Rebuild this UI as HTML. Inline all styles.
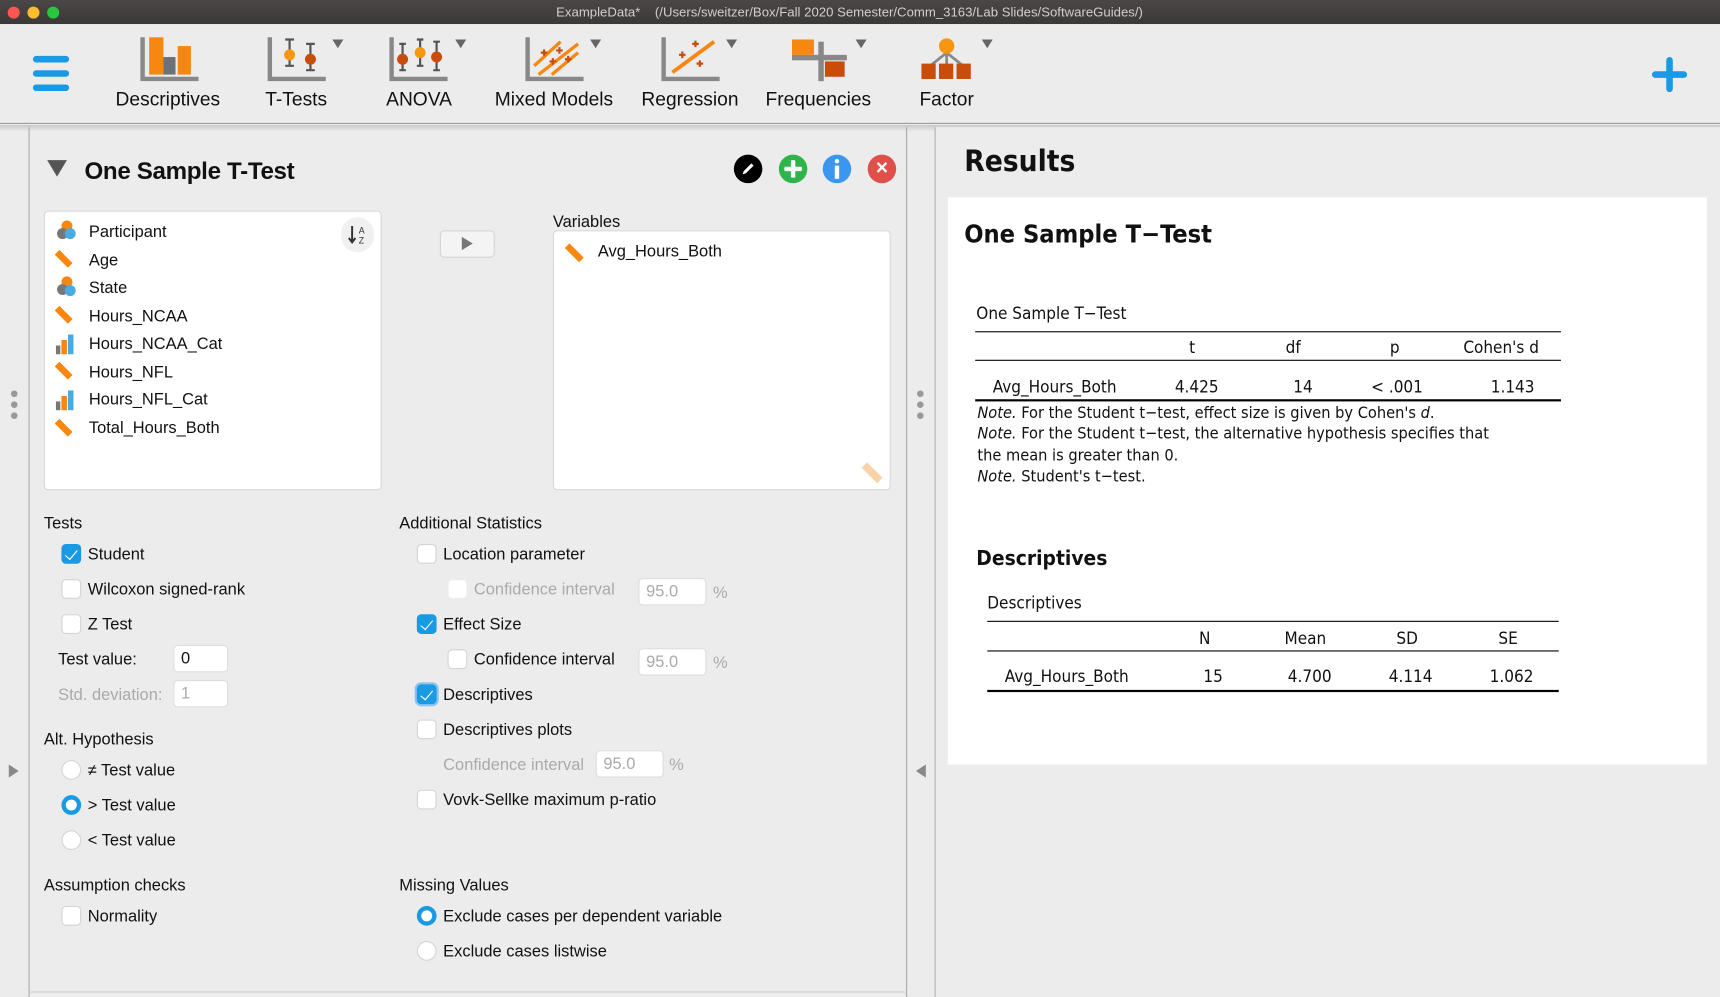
<!DOCTYPE html>
<html><head><meta charset="utf-8">
<style>
*{margin:0;padding:0;box-sizing:border-box}
html,body{width:1720px;height:997px;overflow:hidden;background:#ececec}
#w{position:absolute;left:0;top:0;width:1568px;height:909px;transform:scale(1.09694,1.0968);transform-origin:0 0;font-family:"Liberation Sans",sans-serif;color:#111;background:#ececec}
.a{position:absolute}
.t{position:absolute;font-size:15px;line-height:18px;white-space:nowrap;margin-top:1.5px}
.g{color:#aaa}
.cb{position:absolute;width:18px;height:18px;border-radius:4px;background:#fff;border:1px solid #d4d4d4}
.cb.on{background:#1a9ae2;border-color:#1a9ae2}
.cb.on:after{content:"";position:absolute;left:5px;top:2px;width:5px;height:10px;border:solid #fff;border-width:0 1.6px 1.6px 0;transform:rotate(40deg)}
.rb{position:absolute;width:18px;height:18px;border-radius:50%;background:#fff;border:1px solid #d4d4d4}
.rb.on{border:4px solid #1a9ae2}
.inp{position:absolute;width:50px;height:25px;background:#fff;border:1px solid #ddd;border-radius:4px;font-size:15px;line-height:23px;padding-left:6px}
.tb{position:absolute;top:80px;font-size:17.5px;text-align:center;width:140px;color:#111}
.dd{position:absolute;top:36px;width:0;height:0;border-left:5px solid transparent;border-right:5px solid transparent;border-top:8px solid #666}
.rt{font-family:"DejaVu Sans Condensed","DejaVu Sans",sans-serif;font-size:15.5px}
</style></head><body><div id="w">
<div class="a" style="left:0;top:0;width:1568px;height:22px;background:linear-gradient(#4a4746,#3b3838)"></div>
<div class="a" style="left:7px;top:6px;width:11px;height:11px;border-radius:50%;background:#fd5753"></div>
<div class="a" style="left:25px;top:6px;width:11px;height:11px;border-radius:50%;background:#fdbc2e"></div>
<div class="a" style="left:43px;top:6px;width:11px;height:11px;border-radius:50%;background:#29c73f"></div>
<div class="t" style="left:507px;top:3px;font-size:12px;line-height:16px;color:#cfcfcf;margin-top:0">ExampleData* &nbsp;&nbsp; (/Users/sweitzer/Box/Fall 2020 Semester/Comm_3163/Lab Slides/SoftwareGuides/)</div>
<div class="a" style="left:0;top:22px;width:1568px;height:91px;background:#ececec;border-bottom:1px solid #9a9a9a"></div>
<div class="a" style="left:0;top:114px;width:1568px;height:6px;background:linear-gradient(#c8c8c8,#ececec)"></div>
<div class="a" style="left:30px;top:51px;width:33px;height:6px;border-radius:3px;background:#1a9ae2"></div>
<div class="a" style="left:30px;top:64px;width:33px;height:6px;border-radius:3px;background:#1a9ae2"></div>
<div class="a" style="left:30px;top:77px;width:33px;height:6px;border-radius:3px;background:#1a9ae2"></div>
<svg class="a" style="left:0;top:22px" width="1000" height="60">
 <defs><g id="ax"><path d="M0 0V38H51" fill="none" stroke="#888" stroke-width="4"/></g></defs>
 <g transform="translate(130,12)"><use href="#ax"/><rect x="6" y="0" width="13" height="34" fill="#f7870f"/><rect x="19" y="18" width="11" height="16" fill="#6b7378"/><rect x="32" y="8" width="12" height="26" fill="#f7870f"/></g>
 <g transform="translate(246,12)"><use href="#ax"/><path d="M18 2V26M14 2H22M14 26H22M37 6V30M33 6H41M33 30H41" stroke="#555" stroke-width="2"/><circle cx="18" cy="16" r="5" fill="#f7960f"/><circle cx="37" cy="20" r="5" fill="#c94c0b"/></g>
 <g transform="translate(357,12)"><use href="#ax"/><path d="M10 6V30M26 2V26M41 4V30M7 6H13M7 30H13M23 2H29M23 26H29M38 4H44M38 30H44" stroke="#555" stroke-width="2"/><circle cx="10" cy="20" r="5" fill="#c94c0b"/><circle cx="26" cy="14" r="5" fill="#f7960f"/><circle cx="41" cy="18" r="5" fill="#c94c0b"/></g>
 <g transform="translate(481,12)"><use href="#ax"/><path d="M6 26L30 4M10 34L46 6M22 34L46 14" stroke="#f7870f" stroke-width="3"/><path d="M12 14h6M15 11v6M26 12h6M29 9v6M20 22h6M23 19v6M34 20h6M37 17v6" stroke="#c94c0b" stroke-width="2"/></g>
 <g transform="translate(605,12)"><use href="#ax"/><path d="M8 32L46 4" stroke="#f7870f" stroke-width="3.5"/><path d="M14 16h6M17 13v6M26 6h6M29 3v6M30 24h6M33 21v6" stroke="#c94c0b" stroke-width="2"/></g>
 <g transform="translate(722,12)"><rect x="0" y="16" width="50" height="5" fill="#888"/><rect x="24" y="4" width="5" height="36" fill="#888"/><rect x="0" y="2" width="20" height="14" fill="#f7870f"/><rect x="30" y="22" width="18" height="14" fill="#c94c0b"/></g>
 <g transform="translate(838,12)"><path d="M25 14L10 26M25 14V26M25 14L40 26" stroke="#888" stroke-width="2.5"/><circle cx="25" cy="8" r="7" fill="#f7960f"/><rect x="2" y="24" width="13" height="14" fill="#c94c0b"/><rect x="18" y="24" width="13" height="14" fill="#c94c0b"/><rect x="34" y="24" width="13" height="14" fill="#c94c0b"/></g>
</svg>
<div class="dd" style="left:303px"></div><div class="dd" style="left:415px"></div><div class="dd" style="left:538px"></div><div class="dd" style="left:662px"></div><div class="dd" style="left:780px"></div><div class="dd" style="left:895px"></div>
<div class="tb" style="left:83px">Descriptives</div>
<div class="tb" style="left:200px">T-Tests</div>
<div class="tb" style="left:312px">ANOVA</div>
<div class="tb" style="left:435px">Mixed Models</div>
<div class="tb" style="left:559px">Regression</div>
<div class="tb" style="left:676px">Frequencies</div>
<div class="tb" style="left:793px">Factor</div>
<div class="a" style="left:1506px;top:65px;width:32px;height:6px;border-radius:3px;background:#1a9ae2"></div>
<div class="a" style="left:1519px;top:52px;width:6px;height:32px;border-radius:3px;background:#1a9ae2"></div>

<div class="a" style="left:26px;top:116px;width:1px;height:793px;background:#a8a8a8"></div>
<div class="a" style="left:826px;top:116px;width:1px;height:793px;background:#a8a8a8"></div>
<div class="a" style="left:852px;top:116px;width:1px;height:793px;background:#a8a8a8"></div>
<div class="a" style="left:28px;top:904px;width:797px;height:1px;background:#ccc"></div>
<div class="a" style="left:10px;top:356px;width:6px;height:6px;border-radius:50%;background:#999;box-shadow:0 10px #999,0 20px #999"></div>
<div class="a" style="left:836px;top:356px;width:6px;height:6px;border-radius:50%;background:#999;box-shadow:0 10px #999,0 20px #999"></div>
<div class="a" style="left:8px;top:697px;border-top:6px solid transparent;border-bottom:6px solid transparent;border-left:9px solid #888"></div>
<div class="a" style="left:835px;top:697px;border-top:6px solid transparent;border-bottom:6px solid transparent;border-right:9px solid #888"></div>

<div class="a" style="left:43px;top:146px;border-left:9px solid transparent;border-right:9px solid transparent;border-top:15px solid #555"></div>
<div class="t" style="left:77px;top:140px;font-size:22px;line-height:28px;font-weight:bold;letter-spacing:-0.3px">One Sample T-Test</div>
<div class="a" style="left:669px;top:141px;width:26px;height:26px;border-radius:50%;background:#000"></div>
<svg class="a" style="left:675px;top:147px" width="14" height="14"><path d="M2 12L3 9L10 2L12 4L5 11Z" fill="#fff"/></svg>
<div class="a" style="left:710px;top:141px;width:26px;height:26px;border-radius:50%;background:#2fb44a"></div>
<div class="a" style="left:715px;top:152px;width:16px;height:4px;background:#fff;border-radius:1px"></div><div class="a" style="left:721px;top:146px;width:4px;height:16px;background:#fff;border-radius:1px"></div>
<div class="a" style="left:750px;top:141px;width:26px;height:26px;border-radius:50%;background:#3b96ef"></div>
<div class="a" style="left:761px;top:145px;width:4px;height:4px;border-radius:50%;background:#fff"></div><div class="a" style="left:761px;top:151px;width:4px;height:12px;background:#fff"></div>
<div class="a" style="left:791px;top:141px;width:26px;height:26px;border-radius:50%;background:#e0504a;color:#fff;font-size:19px;line-height:26px;text-align:center;font-weight:bold">×</div>

<div class="a" style="left:40px;top:192px;width:308px;height:255px;background:#fff;border:1px solid #d8d8d8;border-radius:4px"></div>
<div class="a" style="left:311px;top:198px;width:30px;height:32px;border-radius:15px;background:#f0f0f0"></div>
<svg class="a" style="left:316px;top:204px" width="20" height="20"><path d="M5 2V16M2 13L5 17L8 13" stroke="#333" stroke-width="1.8" fill="none"/><text x="11" y="9" font-size="8" font-family="Liberation Sans" fill="#333">A</text><text x="11" y="18" font-size="8" font-family="Liberation Sans" fill="#333">Z</text></svg>
<svg class="a" style="left:48px;top:200px" width="30" height="200">
 <g><circle cx="13" cy="6" r="5" fill="#f7870f"/><circle cx="9" cy="13" r="5" fill="#777"/><circle cx="16" cy="13" r="5" fill="#4aabe0"/></g>
 <g transform="translate(0,26)"><path d="M4 4L16 16" stroke="#f7870f" stroke-width="6"/></g>
 <g transform="translate(0,51)"><circle cx="13" cy="6" r="5" fill="#f7870f"/><circle cx="9" cy="13" r="5" fill="#777"/><circle cx="16" cy="14" r="5" fill="#4aabe0"/></g>
 <g transform="translate(0,77)"><path d="M4 4L16 16" stroke="#f7870f" stroke-width="6"/></g>
 <g transform="translate(0,103)"><rect x="3" y="12" width="4" height="8" fill="#777"/><rect x="8" y="7" width="5" height="13" fill="#f7870f"/><rect x="14" y="2" width="5" height="18" fill="#4aabe0"/></g>
 <g transform="translate(0,128)"><path d="M4 4L16 16" stroke="#f7870f" stroke-width="6"/></g>
 <g transform="translate(0,154)"><rect x="3" y="12" width="4" height="8" fill="#777"/><rect x="8" y="7" width="5" height="13" fill="#f7870f"/><rect x="14" y="2" width="5" height="18" fill="#4aabe0"/></g>
 <g transform="translate(0,180)"><path d="M4 4L16 16" stroke="#f7870f" stroke-width="6"/></g>
</svg>
<div class="t" style="left:81px;top:201px">Participant</div>
<div class="t" style="left:81px;top:227px">Age</div>
<div class="t" style="left:81px;top:252px">State</div>
<div class="t" style="left:81px;top:278px">Hours_NCAA</div>
<div class="t" style="left:81px;top:303px">Hours_NCAA_Cat</div>
<div class="t" style="left:81px;top:329px">Hours_NFL</div>
<div class="t" style="left:81px;top:354px">Hours_NFL_Cat</div>
<div class="t" style="left:81px;top:380px">Total_Hours_Both</div>
<div class="a" style="left:401px;top:210px;width:50px;height:25px;background:#f4f4f4;border:1px solid #d4d4d4;border-radius:4px"></div>
<div class="a" style="left:421px;top:216px;border-top:6px solid transparent;border-bottom:6px solid transparent;border-left:10px solid #777"></div>
<div class="t" style="left:504px;top:192px">Variables</div>
<div class="a" style="left:504px;top:210px;width:308px;height:237px;background:#fff;border:1px solid #d8d8d8;border-radius:4px"></div>
<svg class="a" style="left:512px;top:219px" width="300" height="225"><path d="M5 5L18 18" stroke="#f7870f" stroke-width="6"/><path d="M276 205L290 219" stroke="#f8d3a8" stroke-width="7"/></svg>
<div class="t" style="left:545px;top:219px">Avg_Hours_Both</div>

<div class="t" style="left:40px;top:467px">Tests</div>
<div class="cb on" style="left:56px;top:496px"></div><div class="t" style="left:80px;top:495px">Student</div>
<div class="cb" style="left:56px;top:528px"></div><div class="t" style="left:80px;top:527px">Wilcoxon signed-rank</div>
<div class="cb" style="left:56px;top:560px"></div><div class="t" style="left:80px;top:559px">Z Test</div>
<div class="t" style="left:53px;top:591px">Test value:</div><div class="inp" style="left:158px;top:588px">0</div>
<div class="t g" style="left:53px;top:623px">Std. deviation:</div><div class="inp g" style="left:158px;top:620px">1</div>
<div class="t" style="left:40px;top:664px">Alt. Hypothesis</div>
<div class="rb" style="left:56px;top:693px"></div><div class="t" style="left:80px;top:692px">≠ Test value</div>
<div class="rb on" style="left:56px;top:725px"></div><div class="t" style="left:80px;top:724px">&gt; Test value</div>
<div class="rb" style="left:56px;top:757px"></div><div class="t" style="left:80px;top:756px">&lt; Test value</div>
<div class="t" style="left:40px;top:797px">Assumption checks</div>
<div class="cb" style="left:56px;top:826px"></div><div class="t" style="left:80px;top:825px">Normality</div>

<div class="t" style="left:364px;top:467px">Additional Statistics</div>
<div class="cb" style="left:380px;top:496px"></div><div class="t" style="left:404px;top:495px">Location parameter</div>
<div class="cb" style="left:408px;top:528px;border-color:#eee"></div><div class="t g" style="left:432px;top:527px">Confidence interval</div><div class="inp g" style="left:582px;top:527px;width:62px">95.0</div><div class="t g" style="left:650px;top:530px">%</div>
<div class="cb on" style="left:380px;top:560px"></div><div class="t" style="left:404px;top:559px">Effect Size</div>
<div class="cb" style="left:408px;top:592px"></div><div class="t" style="left:432px;top:591px">Confidence interval</div><div class="inp g" style="left:582px;top:591px;width:62px">95.0</div><div class="t g" style="left:650px;top:594px">%</div>
<div class="cb on" style="left:380px;top:624px;box-shadow:0 0 0 2px #8cc4f0"></div><div class="t" style="left:404px;top:623px">Descriptives</div>
<div class="cb" style="left:380px;top:656px"></div><div class="t" style="left:404px;top:655px">Descriptives plots</div>
<div class="t g" style="left:404px;top:687px">Confidence interval</div><div class="inp g" style="left:543px;top:684px;width:62px">95.0</div><div class="t g" style="left:610px;top:687px">%</div>
<div class="cb" style="left:380px;top:720px"></div><div class="t" style="left:404px;top:719px">Vovk-Sellke maximum p-ratio</div>
<div class="t" style="left:364px;top:797px">Missing Values</div>
<div class="rb on" style="left:380px;top:826px"></div><div class="t" style="left:404px;top:825px">Exclude cases per dependent variable</div>
<div class="rb" style="left:380px;top:858px"></div><div class="t" style="left:404px;top:857px">Exclude cases listwise</div>

<div class="a" style="left:853px;top:116px;width:715px;height:793px;background:#ececec"></div>
<div class="t rt" style="left:879px;top:130px;font-size:27px;line-height:32px;font-weight:bold">Results</div>
<div class="a" style="left:864px;top:180px;width:692px;height:517px;background:#fff"></div>
<div class="t rt" style="left:879px;top:198px;font-size:23px;line-height:28px;font-weight:bold">One Sample T−Test</div>
<div class="t rt" style="left:890px;top:275px">One Sample T−Test</div>
<div class="a" style="left:889px;top:302px;width:534px;height:1px;background:#000"></div>
<div class="t rt" style="left:1084px;top:306px">t</div>
<div class="t rt" style="left:1172px;top:306px">df</div>
<div class="t rt" style="left:1267px;top:306px">p</div>
<div class="t rt" style="left:1334px;top:306px">Cohen's d</div>
<div class="a" style="left:889px;top:328px;width:534px;height:1px;background:#000"></div>
<div class="t rt" style="left:905px;top:342px">Avg_Hours_Both</div>
<div class="t rt" style="left:1071px;top:342px">4.425</div>
<div class="t rt" style="left:1179px;top:342px">14</div>
<div class="t rt" style="left:1250px;top:342px">&lt; .001</div>
<div class="t rt" style="left:1359px;top:342px">1.143</div>
<div class="a" style="left:889px;top:364px;width:534px;height:2px;background:#000"></div>
<div class="a rt" style="left:891px;top:367px;width:498px;font-size:14.8px;line-height:19.3px"><i>Note.</i> For the Student t−test, effect size is given by Cohen's <i>d</i>.<br><i>Note.</i> For the Student t−test, the alternative hypothesis specifies that<br>the mean is greater than 0.<br><i>Note.</i> Student's t−test.</div>
<div class="t rt" style="left:890px;top:495px;font-size:19px;line-height:24px;font-weight:bold">Descriptives</div>
<div class="t rt" style="left:900px;top:539px">Descriptives</div>
<div class="a" style="left:900px;top:566px;width:521px;height:1px;background:#000"></div>
<div class="t rt" style="left:1093px;top:571px">N</div>
<div class="t rt" style="left:1171px;top:571px">Mean</div>
<div class="t rt" style="left:1273px;top:571px">SD</div>
<div class="t rt" style="left:1366px;top:571px">SE</div>
<div class="a" style="left:900px;top:593px;width:521px;height:1px;background:#000"></div>
<div class="t rt" style="left:916px;top:606px">Avg_Hours_Both</div>
<div class="t rt" style="left:1097px;top:606px">15</div>
<div class="t rt" style="left:1174px;top:606px">4.700</div>
<div class="t rt" style="left:1266px;top:606px">4.114</div>
<div class="t rt" style="left:1358px;top:606px">1.062</div>
<div class="a" style="left:900px;top:629px;width:521px;height:2px;background:#000"></div>
</div></body></html>
